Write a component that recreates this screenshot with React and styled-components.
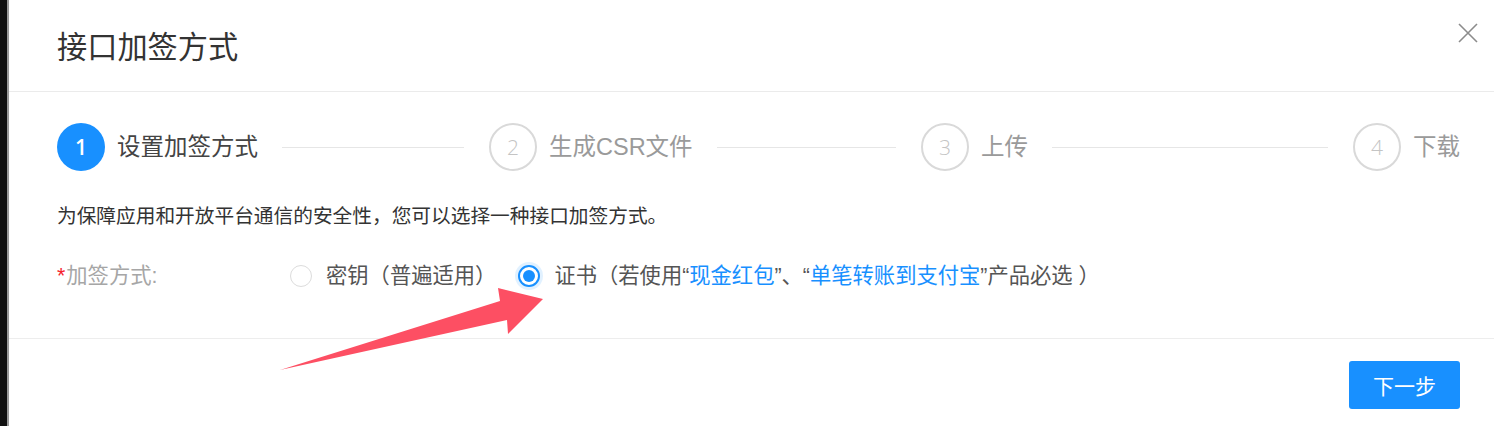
import React from 'react';
import styled, { createGlobalStyle } from 'styled-components';

const GlobalStyle = createGlobalStyle`
html, body {
    margin: 0;
    padding: 0;
    background: #fff;
}
body {
    font-family: "Liberation Sans", "Noto Sans CJK SC", sans-serif;
}
`;

const steps = ['设置加签方式', '生成CSR文件', '上传', '下载'];

function App() {
    return <Page>
        <GlobalStyle />
        <EdgeStrip />
        <Dialog>
            <Header>
                <Title>接口加签方式</Title>
                <CloseBtn aria-label="close">
                    <svg width="20" height="20" viewBox="0 0 20 20">
                        <path d="M1 1 L19 19 M19 1 L1 19" stroke="#8c8c8c" strokeWidth="1.6" fill="none" />
                    </svg>
                </CloseBtn>
            </Header>
            <Body>
                <Steps>
                    {steps.map((s, i) => {
                        const last = i === steps.length - 1;
                        return <Step key={i} last={last}>
                            <StepCircle active={i === 0}>{i + 1}</StepCircle>
                            <StepTitle active={i === 0} last={last}>{s}</StepTitle>
                            {!last && <StepTail />}
                        </Step>
                    })}
                </Steps>
                <Desc>为保障应用和开放平台通信的安全性，您可以选择一种接口加签方式。</Desc>
                <FormRow>
                    <Label><Star>*</Star>加签方式:</Label>
                    <RadioGroup>
                        <RadioItem>
                            <Radio />
                            <RadioText>密钥（普遍适用）</RadioText>
                        </RadioItem>
                        <RadioItem>
                            <Radio checked />
                            <RadioText>
                                证书（若使用“<Link>现金红包</Link>”、“<Link>单笔转账到支付宝</Link>”产品必选 ）
                            </RadioText>
                        </RadioItem>
                    </RadioGroup>
                </FormRow>
            </Body>
            <Footer>
                <PrimaryBtn>下一步</PrimaryBtn>
            </Footer>
            <Arrow width="270" height="90" viewBox="0 0 270 90">
                <polygon
                    points="2,85 229,35 230,49 265,14 220,3 222,16"
                    fill="#fd4f63"
                />
            </Arrow>
        </Dialog>
    </Page>
}
export default App;


const Page = styled.div`
display:flex;
width:1494px;
height:426px;
overflow:hidden;
`;

const EdgeStrip = styled.div`
width:7px;
flex-shrink:0;
background:#111;
border-right:2px solid #9a9a9a;
`;

const Dialog = styled.div`
position:relative;
flex:1;
background:#fff;
display:flex;
flex-direction:column;
`;

const Header = styled.div`
height:91px;
border-bottom:1px solid #ebebeb;
padding:0 16px 0 48px;

display:flex;
justify-content:space-between;
align-items:center;
`;

const Title = styled.div`
color:#333;
font-size:30.2px;
line-height:36px;
margin-top:4px;
`;

const CloseBtn = styled.button`
align-self:flex-start;
margin-top:23px;
padding:0;
border:none;
background:none;
width:20px;
height:20px;
cursor:pointer;
`;

const Body = styled.div`
padding:31px 34px 48px 48px;
border-bottom:1px solid #ededed;
`;

const Steps = styled.div`
display:flex;
align-items:center;
`;

const Step = styled.div`
display:flex;
align-items:center;
flex:${p => p.last ? 'none' : '1'};
margin-right:${p => p.last ? '0' : '25px'};
overflow:hidden;
`;

const StepCircle = styled.div`
width:48px;
height:48px;
box-sizing:border-box;
border-radius:50%;
flex-shrink:0;
margin-right:12px;

display:flex;
justify-content:center;
align-items:center;

background:${p => p.active ? '#1890ff' : '#fff'};
border:${p => p.active ? 'none' : '2px solid #d9d9d9'};
color:${p => p.active ? '#fff' : '#c4c4c4'};
font-family:"Open Sans", "Liberation Sans", sans-serif;
font-size:21px;
font-weight:${p => p.active ? 600 : 300};
`;

const StepTitle = styled.div`
white-space:nowrap;
padding-right:${p => p.last ? '0' : '24px'};
font-size:23.5px;
line-height:30px;
color:${p => p.active ? '#444' : '#9a9a9a'};
`;

const StepTail = styled.div`
flex:1;
height:1px;
background:#e6e6e6;
`;

const Desc = styled.div`
margin-top:31px;
font-size:19.7px;
line-height:28px;
color:#333;
`;

const FormRow = styled.div`
margin-top:32px;
display:flex;
align-items:center;
`;

const Label = styled.div`
width:233px;
flex-shrink:0;
font-size:21.3px;
line-height:28px;
color:#a6a6a6;
`;

const Star = styled.span`
color:#f5222d;
margin-right:1px;
`;

const RadioGroup = styled.div`
display:flex;
align-items:center;
gap:22px;
`;

const RadioItem = styled.label`
display:flex;
align-items:center;
gap:14px;
cursor:pointer;
`;

const Radio = styled.span`
position:relative;
width:22px;
height:22px;
box-sizing:border-box;
border-radius:50%;
border:${p => p.checked ? '2px solid #1890ff' : '1.5px solid #dcdcdc'};
box-shadow:${p => p.checked ? '0 0 0 3px rgba(24,144,255,0.13)' : 'none'};
background:#fff;
flex-shrink:0;

&::after{
    content:'';
    display:${p => p.checked ? 'block' : 'none'};
    position:absolute;
    left:3px;
    top:3px;
    width:12px;
    height:12px;
    border-radius:50%;
    background:#1890ff;
}
`;

const RadioText = styled.span`
font-size:21.3px;
line-height:28px;
color:#555;
white-space:nowrap;
`;

const Link = styled.span`
color:#1890ff;
`;

const Footer = styled.div`
padding:22px 34px 0 0;
display:flex;
justify-content:flex-end;
`;

const PrimaryBtn = styled.button`
width:111px;
height:48px;
border:none;
border-radius:3px;
background:#1890ff;
color:#fff;
font-family:"Liberation Sans", "Noto Sans CJK SC", sans-serif;
font-size:21px;
cursor:pointer;
`;

const Arrow = styled.svg`
position:absolute;
left:269px;
top:285px;
pointer-events:none;
`;
